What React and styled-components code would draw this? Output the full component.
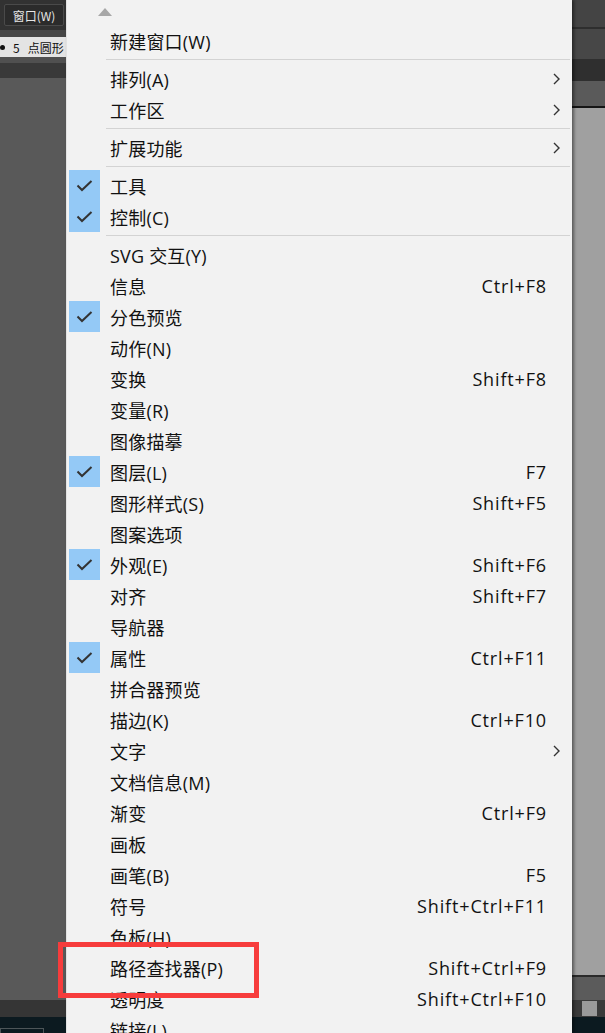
import styled, { createGlobalStyle } from "styled-components";

const Global = createGlobalStyle`
    html, body { margin: 0; padding: 0; background: #595959; }
    * { box-sizing: border-box; }
`

const Page = styled.div`
    position: relative;
    display: flex;
    width: 605px;
    height: 1033px;
    overflow: hidden;
    font-family: "Open Sans", "Noto Sans CJK SC", sans-serif;
`

const Side = styled.div`
    display: flex;
    flex-direction: column;
    width: ${p => p.$w ? p.$w + "px" : "auto"};
    flex: ${p => p.$w ? "none" : "1"};
`

const Band = styled.div`
    flex: ${p => p.$h ? "none" : "1"};
    height: ${p => p.$h ? p.$h + "px" : "auto"};
    background: ${p => p.$bg};
    border-bottom: ${p => p.$line ? "2px solid " + p.$line : "none"};
    display: flex;
    align-items: center;
    position: relative;
`

const WindowButton = styled.div`
    margin-left: 4px;
    width: 60px;
    height: 22px;
    background: #2b2b2b;
    border: 1px solid #4a4a4a;
    border-radius: 2px;
    color: #e6e6e6;
    font-size: 12px;
    display: flex;
    align-items: center;
    justify-content: center;
    font-family: "Noto Sans CJK SC", sans-serif;
`

const ToolText = styled.div`
    display: flex;
    align-items: center;
    font-size: 12px;
    color: #111;
    white-space: nowrap;
    font-family: "Noto Sans CJK SC", sans-serif;
    & i {
        width: 5px;
        height: 5px;
        border-radius: 50%;
        background: #111;
        margin-right: 8px;
    }
    & b { font-weight: 400; margin-right: 8px; }
`

const SmallSquare = styled.div`
    width: 15px;
    height: 15px;
    background: #9a9a9a;
    margin-left: 10px;
`

const Footer = styled.div`
    flex: none;
    height: 16px;
    background: #0c1a20;
    padding-top: 11px;
    & div {
        width: 44px;
        height: 5px;
        border: 1px solid #4d5558;
        border-bottom: none;
    }
`

const Menu = styled.div`
    width: 506px;
    flex: none;
    background: #f2f2f2;
    border-left: 1px solid #e2e2e2;
    box-shadow: 2px 0 3px rgba(0,0,0,0.45);
    z-index: 1;
    display: flex;
    flex-direction: column;
`

const ScrollUp = styled.div`
    height: 25px;
    flex: none;
    display: flex;
    align-items: flex-start;
    padding-left: 31px;
    padding-top: 8px;
    & span {
        width: 0;
        height: 0;
        border-left: 7px solid transparent;
        border-right: 7px solid transparent;
        border-bottom: 8px solid #a7a7a7;
    }
`

const Item = styled.div`
    display: flex;
    align-items: center;
    height: 31px;
    flex: none;
    padding-left: 2px;
    padding-right: 12px;
    color: #111;
    font-size: 18px;
`

const CheckCell = styled.div`
    width: 31px;
    height: 31px;
    background: ${p => p.$on ? "#94c9f6" : "transparent"};
    display: flex;
    align-items: center;
    justify-content: center;
`

const Label = styled.div`
    flex: 1;
    margin-left: 10px;
    white-space: nowrap;
    letter-spacing: 0.2px;
`

const Shortcut = styled.div`
    white-space: nowrap;
    letter-spacing: 0.85px;
`

const Trail = styled.div`
    width: 13px;
    display: flex;
    justify-content: flex-end;
`

const Separator = styled.div`
    height: 7px;
    flex: none;
    display: flex;
    align-items: center;
    padding-left: 39px;
    padding-right: 2px;
    & i { flex: 1; height: 1px; background: #d3d3d3; }
`

const Highlight = styled.div`
    position: absolute;
    left: 58px;
    top: 942px;
    width: 201px;
    height: 56px;
    border: 5px solid #f73c3c;
    z-index: 2;
`

const Check = () => (
    <svg width="17" height="12" viewBox="0 0 17 12">
        <polyline points="1.5,5.5 6,10 15.5,1" fill="none" stroke="#333" strokeWidth="2" />
    </svg>
)

const Chevron = () => (
    <svg width="7" height="12" viewBox="0 0 7 12">
        <polyline points="1,1 6,6 1,11" fill="none" stroke="#333" strokeWidth="1.4" />
    </svg>
)

const items = [
    ["新建窗口(W)"],
    "-",
    ["排列(A)", "", false, true],
    ["工作区", "", false, true],
    "-",
    ["扩展功能", "", false, true],
    "-",
    ["工具", "", true],
    ["控制(C)", "", true],
    "-",
    ["SVG 交互(Y)"],
    ["信息", "Ctrl+F8"],
    ["分色预览", "", true],
    ["动作(N)"],
    ["变换", "Shift+F8"],
    ["变量(R)"],
    ["图像描摹"],
    ["图层(L)", "F7", true],
    ["图形样式(S)", "Shift+F5"],
    ["图案选项"],
    ["外观(E)", "Shift+F6", true],
    ["对齐", "Shift+F7"],
    ["导航器"],
    ["属性", "Ctrl+F11", true],
    ["拼合器预览"],
    ["描边(K)", "Ctrl+F10"],
    ["文字", "", false, true],
    ["文档信息(M)"],
    ["渐变", "Ctrl+F9"],
    ["画板"],
    ["画笔(B)", "F5"],
    ["符号", "Shift+Ctrl+F11"],
    ["色板(H)"],
    ["路径查找器(P)", "Shift+Ctrl+F9"],
    ["透明度", "Shift+Ctrl+F10"],
    ["链接(L)"],
]

function App() {
    return (
        <Page>
            <Global />
            <Side $w={66}>
                <Band $h={30} $bg="#323232"><WindowButton>窗口(W)</WindowButton></Band>
                <Band $h={7} $bg="#464646" />
                <Band $h={20} $bg="#e4e4e4"><ToolText><i /><b>5</b>点圆形</ToolText></Band>
                <Band $h={6} $bg="#505050" />
                <Band $h={15} $bg="#393939" />
                <Band $bg="#595959" />
                <Band $h={17} $bg="#353535" />
                <Footer><div /></Footer>
            </Side>
            <Menu>
                <ScrollUp><span /></ScrollUp>
                {items.map((it, i) => it === "-" ?
                    <Separator key={i}><i /></Separator> :
                    <Item key={i}>
                        <CheckCell $on={it[2]}>{it[2] && <Check />}</CheckCell>
                        <Label>{it[0]}</Label>
                        {it[1] && <Shortcut>{it[1]}</Shortcut>}
                        <Trail>{it[3] && <Chevron />}</Trail>
                    </Item>
                )}
            </Menu>
            <Side>
                <Band $h={29} $bg="#444444" $line="#2e2e2e" />
                <Band $h={32} $bg="#474747" $line="#2f2f2f" />
                <Band $h={20} $bg="#2f2f2f" />
                <Band $h={27} $bg="#5a5a5a" $line="#151515" />
                <Band $bg="#a0a0a0" $line="#2a2a2a" />
                <Band $h={23} $bg="#5b5b5b" />
                <Band $h={17} $bg="#3a3a3a"><SmallSquare /></Band>
                <Band $bg="#0c1a20" $h={16} />
            </Side>
            <Highlight />
        </Page>
    )
}

export default App;
